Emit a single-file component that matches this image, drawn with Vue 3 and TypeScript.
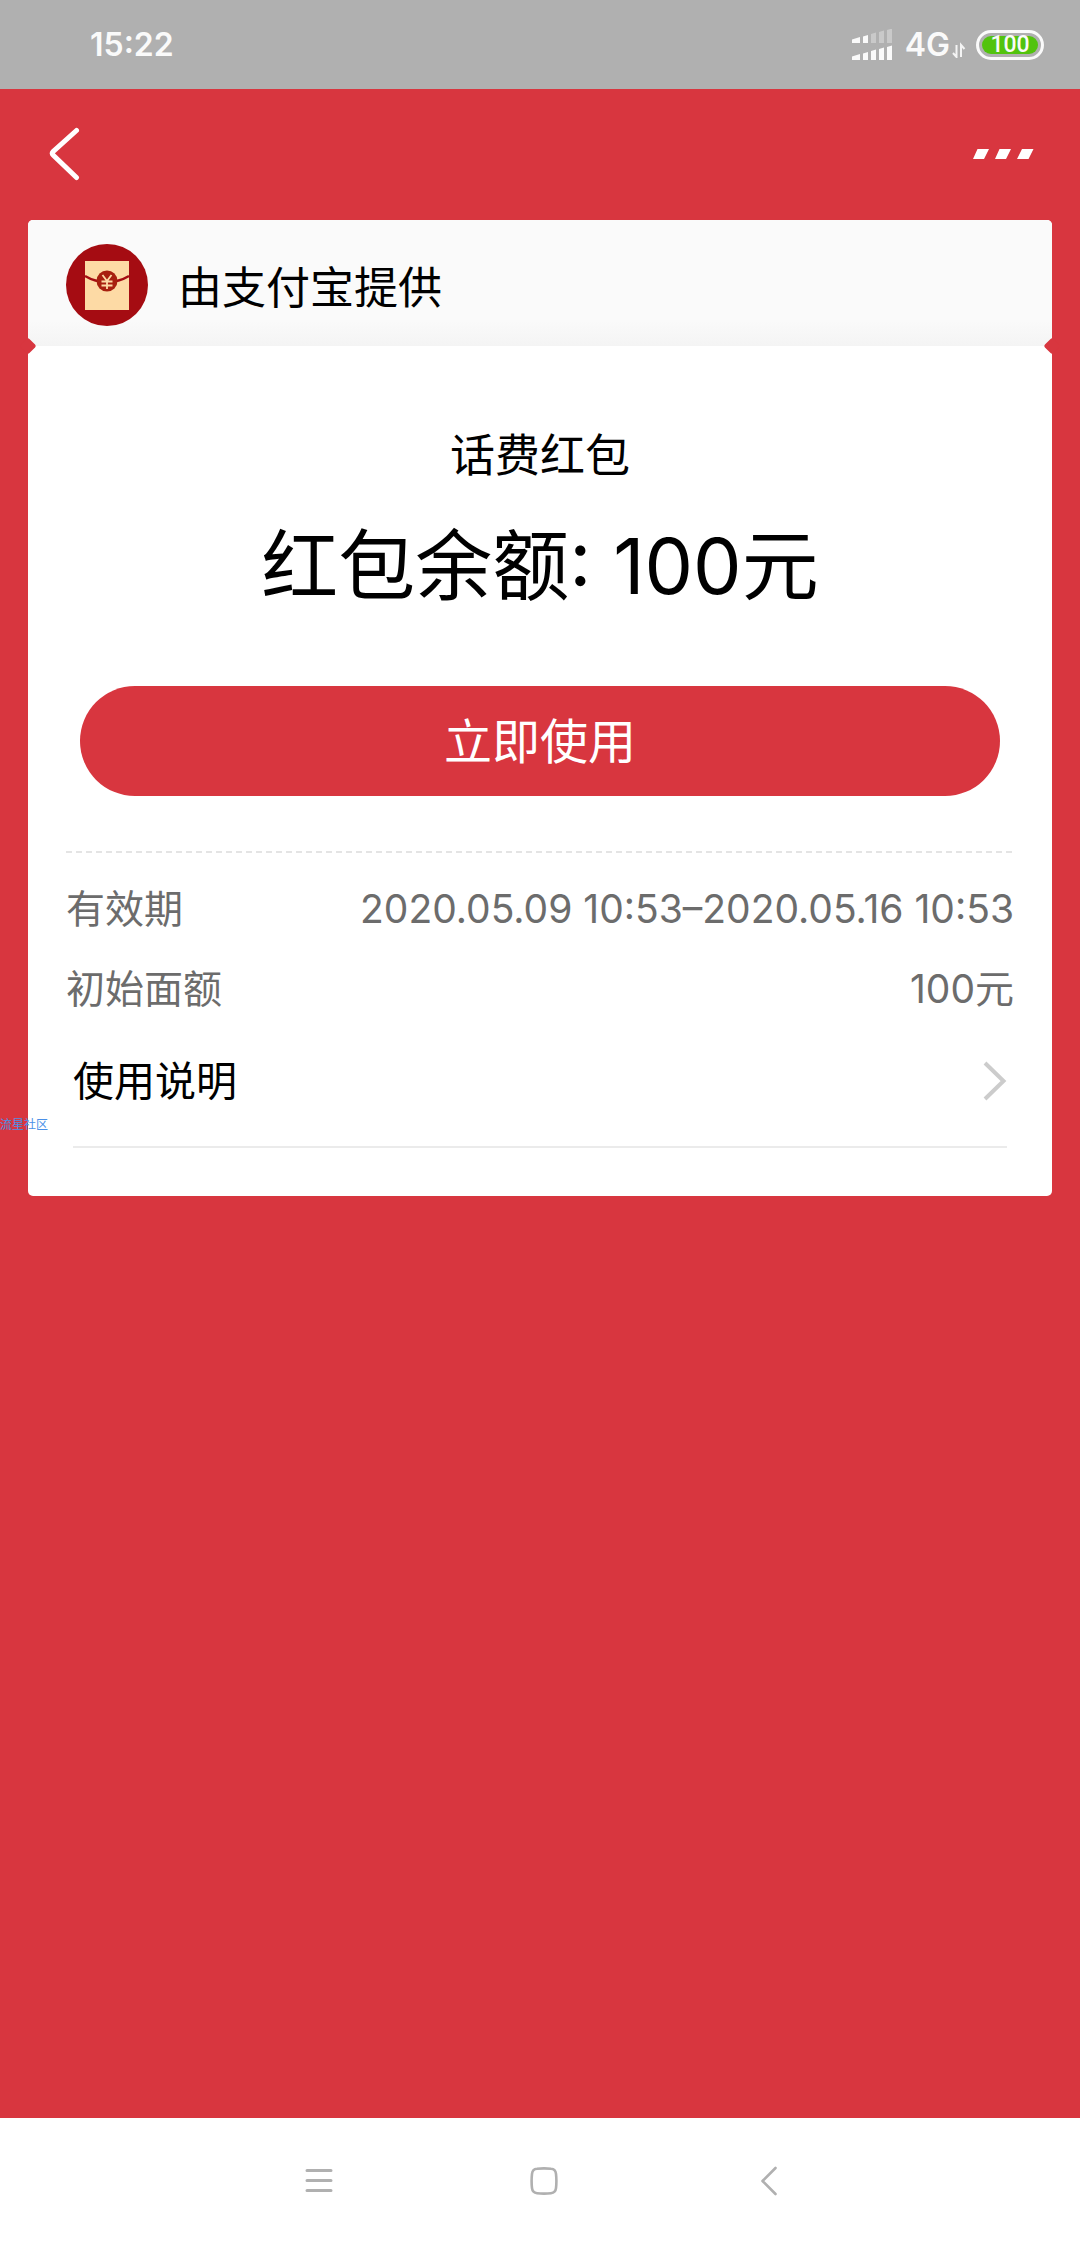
<script setup lang="ts">
interface Detail {
  label: string
  value: string
}

const details: Detail[] = [
  { label: '有效期', value: '2020.05.09 10:53–2020.05.16 10:53' },
  { label: '初始面额', value: '100元' },
]
</script>

<template>
  <div class="page">
    <header class="status">
      <span class="clock">15:22</span>
      <div class="indicators">
        <svg class="signal" width="41" height="32" viewBox="0 0 41 32" fill="#fafafa" aria-hidden="true">
          <path d="M0 10.500 8 8v6H0zM11 7.500l5-1.500v8h-5z" />
          <path opacity=".35" d="M19 5l5-1.500V14h-5zM27 3l5-1.500V14h-5zM35 1l5-1.500V14h-5z" />
          <path d="M0 27.500 8 25v6H0zM11 24.500l5-1.500v8h-5zM19 22l5-1.500V31h-5zM27 20l5-1.500V31h-5zM35 18l5-1.500V31h-5z" />
        </svg>
        <span class="network">4G</span>
        <svg class="traffic" width="14" height="26" viewBox="0 0 14 26" fill="none" stroke="#f4f4f4" stroke-width="2" aria-hidden="true">
          <path d="M4.500 13v12L1 21M9 25V13l3.500 4" />
        </svg>
        <span class="battery"><span class="level">100</span></span>
      </div>
    </header>

    <nav class="bar">
      <button class="icon-button" type="button" aria-label="返回">
        <svg width="32" height="54" viewBox="0 0 32 54" fill="none" stroke="#fff" stroke-width="5" stroke-linecap="round" stroke-linejoin="round">
          <path d="M27.500 3.500 4.300 24.300q-2 2 0 4L27.500 50.500" />
        </svg>
      </button>
      <button class="icon-button" type="button" aria-label="更多">
        <svg width="62" height="12" viewBox="0 0 62 12" fill="#fff">
          <path d="M5.500 1H17l-5 10H1zM27.500 1H39l-5 10H23zM50 1h11.500l-5 10H45z" />
        </svg>
      </button>
    </nav>

    <main class="card">
      <div class="provider">
        <svg class="logo" width="82" height="82" viewBox="0 0 82 82" aria-hidden="true">
          <circle cx="41" cy="41" r="41" fill="#a50c12" />
          <path d="M19 17h44v49H19z" fill="#fddaa5" />
          <path d="M19 32q10 6 22 6t22-6" fill="none" stroke="#a50c12" stroke-width="2.500" />
          <circle cx="41" cy="37" r="10.500" fill="#a8200f" />
          <path d="M36.500 31l4.500 6 4.500-6M41 37v8M35.500 37.500h11M35.500 41.500h11" fill="none" stroke="#fddaa5" stroke-width="1.800" />
        </svg>
        <span class="provider-name">由支付宝提供</span>
      </div>

      <section class="summary">
        <h2 class="title">话费红包</h2>
        <p class="balance">红包余额: 100元</p>
        <button class="use" type="button">立即使用</button>
      </section>

      <dl class="details">
        <div v-for="item in details" :key="item.label" class="row">
          <dt>{{ item.label }}</dt>
          <dd>{{ item.value }}</dd>
        </div>
      </dl>

      <a class="guide" href="#guide">
        <span>使用说明</span>
        <svg width="24" height="40" viewBox="0 0 24 40" fill="none" stroke="#ccc" stroke-width="4" aria-hidden="true">
          <path d="M2 2l18.500 18L2 38" />
        </svg>
      </a>
    </main>

    <footer class="system">
      <button class="key" type="button" aria-label="最近任务">
        <svg width="28" height="28" viewBox="0 0 28 28" fill="none" stroke="#b0b0b0" stroke-width="3" stroke-linecap="round">
          <path d="M2 3.500h24M2 13.500h24M2 23.500h24" />
        </svg>
      </button>
      <button class="key" type="button" aria-label="主页">
        <svg width="28" height="28" viewBox="0 0 28 28" fill="none" stroke="#b0b0b0" stroke-width="2.600">
          <path d="M7 1.800q7-.8 14 0 4.500.4 5 5 .8 7.200 0 14.400-.5 4.600-5 5-7 .8-14 0-4.500-.4-5-5-.8-7.200 0-14.400.5-4.600 5-5z" />
        </svg>
      </button>
      <button class="key" type="button" aria-label="后退">
        <svg width="28" height="30" viewBox="0 0 28 30" fill="none" stroke="#b0b0b0" stroke-width="2.600" stroke-linecap="round" stroke-linejoin="round">
          <path d="M20.500 2 7.500 15l13 13" />
        </svg>
      </button>
    </footer>

    <span class="watermark">流星社区</span>
  </div>
</template>

<style>
body {
  margin: 0;
}
</style>

<style scoped>
.page {
  position: relative;
  display: flex;
  flex-direction: column;
  min-height: 100vh;
  background: #d8363f;
  color: #000;
  font-family: Inter, "Noto Sans CJK SC", sans-serif;
}

button {
  padding: 0;
  border: 0;
  background: none;
  font-family: inherit;
  cursor: pointer;
}

svg {
  display: block;
  flex: none;
}

.status {
  display: flex;
  align-items: center;
  justify-content: space-between;
  height: 89px;
  padding: 0 36px 0 90px;
  background: #b0b0b0;
  color: #fafafa;
}

.clock,
.network {
  font-size: 32px;
  line-height: 40px;
  font-weight: 600;
}

.indicators {
  display: flex;
  align-items: center;
}

.network {
  margin-left: 12px;
}

.traffic {
  margin: 0 10px 0 2px;
}

.battery {
  display: flex;
  box-sizing: border-box;
  width: 68px;
  height: 30px;
  padding: 3px;
  border: 3px solid #fafafa;
  border-radius: 15px;
}

.level {
  flex: 1;
  border-radius: 9px;
  background: #52c30e;
  font-family: Roboto, sans-serif;
  font-size: 23px;
  line-height: 18px;
  font-weight: 500;
  text-align: center;
}

.bar {
  display: flex;
  align-items: center;
  justify-content: space-between;
  box-sizing: border-box;
  height: 131px;
  padding: 0 46px 2px 49px;
}

.card {
  position: relative;
  margin: 0 28px;
  padding-bottom: 48px;
  border-radius: 5px;
  background: #fff;
}

.provider {
  position: relative;
  display: flex;
  align-items: center;
  gap: 30px;
  box-sizing: border-box;
  height: 126px;
  padding: 4px 38px 0;
  border-radius: 5px 5px 0 0;
  background: linear-gradient(#fafafa 80%, #f4f4f4);
  font-size: 44px;
  line-height: 60px;
}

.provider-name {
  padding-top: 6px;
}

.provider::before,
.provider::after {
  content: "";
  position: absolute;
  bottom: -6px;
  width: 12px;
  height: 12px;
  border-radius: 2px;
  background: #d8363f;
  transform: rotate(45deg);
}

.provider::before {
  left: -6px;
}

.provider::after {
  right: -6px;
}

.summary {
  display: flex;
  flex-direction: column;
  align-items: center;
  padding: 80px 52px 55px;
}

.title {
  margin: 0;
  font-size: 45px;
  line-height: 60px;
  font-weight: 400;
}

.balance {
  margin: 30px 0 70px;
  font-size: 77px;
  line-height: 100px;
}

.use {
  width: 100%;
  height: 110px;
  padding-top: 2px;
  border-radius: 55px;
  background: #d8363f;
  color: #fff;
  font-size: 48px;
  line-height: 108px;
}

.details {
  margin: 0 38px;
  padding-top: 18px;
  background: repeating-linear-gradient(90deg, #e4e4e4 0 6px, transparent 6px 10px) top / 100% 2px no-repeat;
  color: #6c6c6c;
  font-size: 39px;
}

.row {
  display: flex;
  justify-content: space-between;
  line-height: 80px;
}

.row dd {
  margin: 0;
}

.guide {
  display: flex;
  align-items: center;
  justify-content: space-between;
  box-sizing: border-box;
  height: 119px;
  margin: 0 45px;
  padding-bottom: 13px;
  border-bottom: 2px solid #ebebeb;
  color: #000;
  font-size: 41px;
  line-height: 56px;
  text-decoration: none;
}

.system {
  display: flex;
  align-items: center;
  justify-content: center;
  gap: 165px;
  box-sizing: border-box;
  height: 130px;
  margin-top: auto;
  padding: 0 0 5px 8px;
  background: #fff;
}

.key {
  display: grid;
  place-items: center;
  width: 60px;
  height: 60px;
}

.watermark {
  position: absolute;
  top: 1117px;
  left: 0;
  color: #4a90e8;
  font-size: 12px;
  line-height: 16px;
}
</style>
